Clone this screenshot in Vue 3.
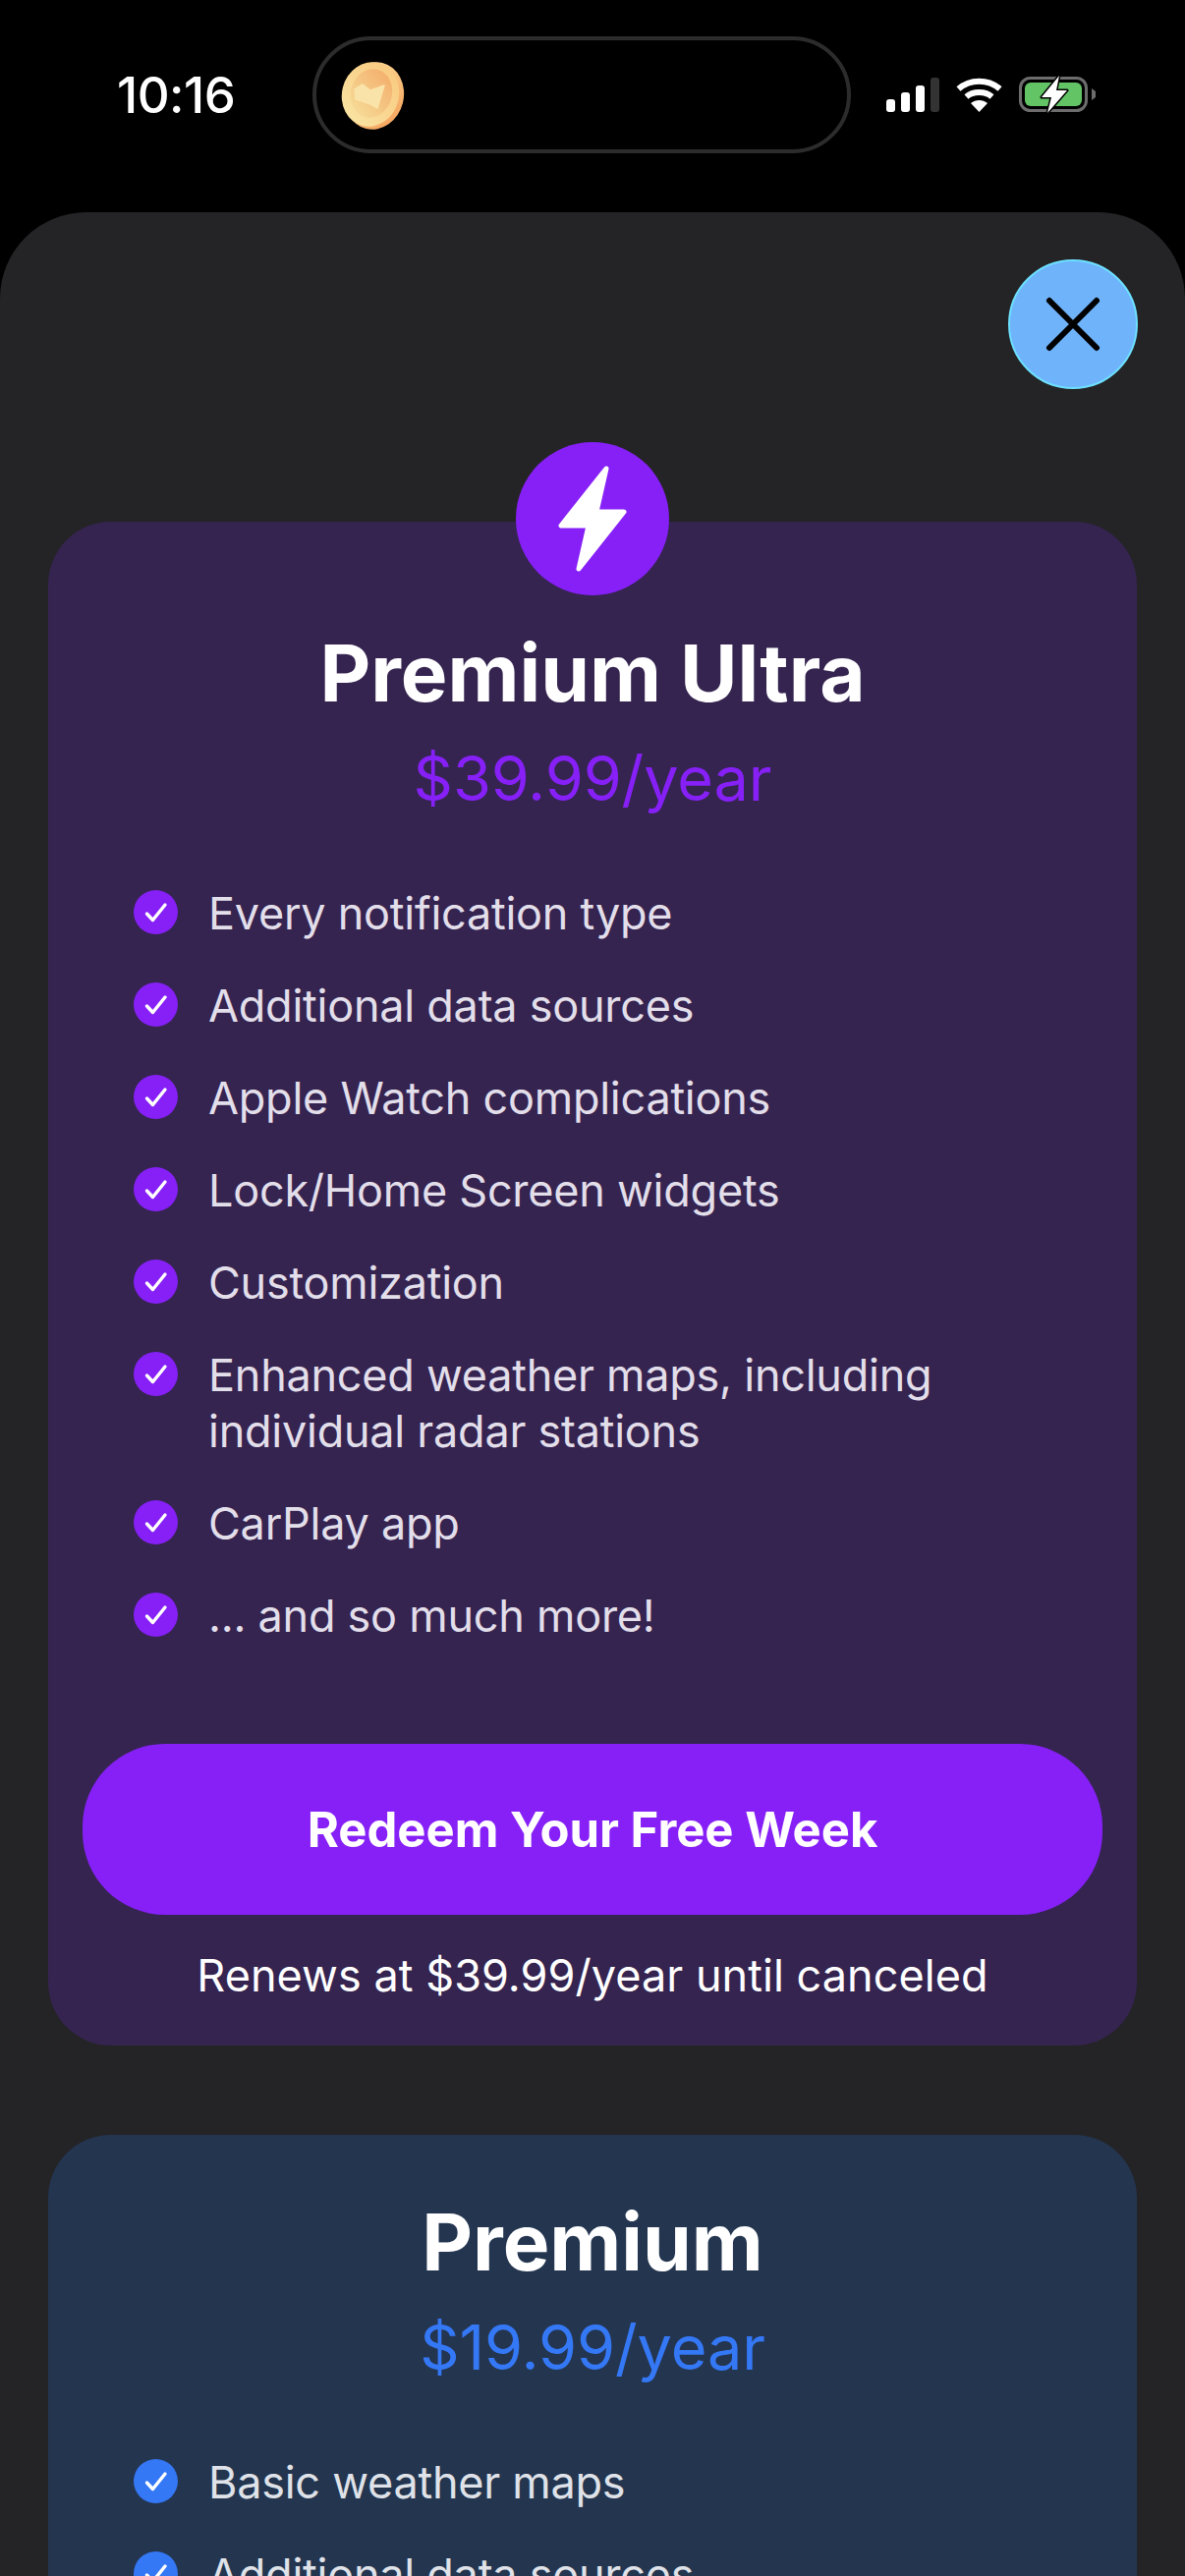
<script setup>
const ultra = ['Every notification type','Additional data sources','Apple Watch complications','Lock/Home Screen widgets','Customization','Enhanced weather maps, including individual radar stations','CarPlay app','... and so much more!']
const premium = ['Basic weather maps','Additional data sources']
</script>

<template>
  <div class="screen">
    <header class="status">
      <span class="time">10:16</span>
      <div class="island">
        <svg class="coin" width="66" height="70" viewBox="0 0 66 70">
          <defs>
            <linearGradient id="coinEdge" x1="0" y1="0" x2="1" y2="1"><stop offset="0" stop-color="#fbe3a0"/><stop offset="1" stop-color="#f59e58"/></linearGradient>
            <linearGradient id="coinFace" x1="0.2" y1="1" x2="0.8" y2="0"><stop offset="0" stop-color="#f9e4a4"/><stop offset="1" stop-color="#f9c97e"/></linearGradient>
            <linearGradient id="coinIn" x1="0.2" y1="1" x2="0.8" y2="0"><stop offset="0" stop-color="#f6dc98"/><stop offset="1" stop-color="#f4ae6c"/></linearGradient>
          </defs>
          <ellipse cx="35" cy="35.5" rx="30" ry="34.5" transform="rotate(14 35 35)" fill="url(#coinEdge)"/>
          <ellipse cx="31" cy="34" rx="29" ry="33" transform="rotate(14 31 34)" fill="url(#coinFace)"/>
          <ellipse cx="32" cy="33" rx="21" ry="25" transform="rotate(14 32 33)" fill="url(#coinIn)"/>
          <path d="M15 29 L23 24 L31 30 L45 25 L38 48 L31 44 L16 39 Z" fill="#fae3a8" stroke="#fae3a8" stroke-width="1.5" stroke-linejoin="round"/>
        </svg>
      </div>
      <div class="indicators">
        <div class="signal"><i class="b1"></i><i class="b2"></i><i class="b3"></i><i class="b4"></i></div>
        <svg class="wifi" width="47" height="35" viewBox="0 0 47 35" fill="none" stroke="#fff" stroke-width="6">
          <path d="M2.5 11.5 C14 1 33 1 44.5 11.5"/>
          <path d="M10.5 19.5 C17 13.5 30 13.5 36.5 19.5"/>
          <path d="M23.5 35 L15 26 C20 22 27 22 32 26 Z" fill="#fff" stroke="none"/>
        </svg>
        <svg class="battery" width="78" height="39" viewBox="0 0 78 39">
          <rect x="1.5" y="2.5" width="67" height="33" rx="10" fill="none" stroke="#6d6d6d" stroke-width="3"/>
          <rect x="6" y="7" width="58" height="24" rx="6" fill="#63c466"/>
          <path d="M74 13 L78 16 V22 L74 25 Z" fill="#6d6d6d"/>
          <path d="M41 0 L23 22 H33 L29 38 L49 15 H38 Z" fill="#fff" stroke="#000" stroke-width="3" stroke-linejoin="round" paint-order="stroke"/>
        </svg>
      </div>
    </header>

    <main class="sheet">
      <button class="close" aria-label="Close">
        <svg width="56" height="56" viewBox="0 0 56 56" fill="none" stroke="#000" stroke-width="6" stroke-linecap="round">
          <path d="M4 4 L52 52 M52 4 L4 52"/>
        </svg>
      </button>

      <section class="card card-ultra">
        <div class="badge">
          <svg width="70" height="110" viewBox="0 0 70 110">
            <path d="M49 4 L3 62 H31 L21 106 L67 48 H39 Z" fill="#fff" stroke="#fff" stroke-width="5" stroke-linejoin="round"/>
          </svg>
        </div>
        <h2 class="title">Premium Ultra</h2>
        <p class="price">$39.99/year</p>
        <ul class="list">
          <li v-for="item in ultra" :key="item" class="row">
            <span class="tick">
              <svg width="24" height="22" viewBox="0 0 24 22" fill="none" stroke="#fff" stroke-width="3.4" stroke-linecap="round" stroke-linejoin="round"><path d="M2.5 12 L8.5 18.5 L21 3"/></svg>
            </span>
            <span class="label">{{ item }}</span>
          </li>
        </ul>
        <button class="cta">Redeem Your Free Week</button>
        <p class="renew">Renews at $39.99/year until canceled</p>
      </section>

      <section class="card card-premium">
        <h2 class="title">Premium</h2>
        <p class="price">$19.99/year</p>
        <ul class="list">
          <li v-for="item in premium" :key="item" class="row">
            <span class="tick">
              <svg width="24" height="22" viewBox="0 0 24 22" fill="none" stroke="#fff" stroke-width="3.4" stroke-linecap="round" stroke-linejoin="round"><path d="M2.5 12 L8.5 18.5 L21 3"/></svg>
            </span>
            <span class="label">{{ item }}</span>
          </li>
        </ul>
      </section>
    </main>
  </div>
</template>

<style>
html, body { margin: 0; background: #000; }
</style>

<style scoped>
.screen {
  width: 1206px;
  height: 2622px;
  overflow: hidden;
  background: #000;
  font-family: Inter, "Liberation Sans", sans-serif;
  color: #fff;
}
.status {
  height: 216px;
  box-sizing: border-box;
  padding: 37px 0 0 119px;
  display: flex;
  align-items: flex-start;
}
.time {
  width: 199px;
  font-size: 51px;
  font-weight: 500;
  line-height: 119px;
  letter-spacing: -0.5px;
}
.island {
  width: 548px;
  height: 119px;
  box-sizing: border-box;
  border: 4px solid #2c2c2c;
  border-radius: 60px;
  background: #000;
  display: flex;
  align-items: center;
  padding-left: 24px;
}
.coin { display: block; }
.indicators {
  margin-left: 36px;
  padding-top: 42px;
  display: flex;
  align-items: flex-start;
  gap: 17px;
}
.signal { display: flex; align-items: flex-end; gap: 6px; height: 35px; }
.signal i { display: block; width: 9px; border-radius: 3px; background: #fff; }
.signal .b1 { height: 13px; }
.signal .b2 { height: 20px; }
.signal .b3 { height: 27px; }
.signal .b4 { height: 35px; background: #333; }
.wifi, .battery { display: block; }
.battery { margin-top: -2px; }

.sheet {
  position: relative;
  min-height: 2406px;
  box-sizing: border-box;
  padding: 315px 49px 0;
  background: #242426;
  border-radius: 88px 88px 0 0;
}
.close {
  position: absolute;
  top: 48px;
  right: 48px;
  width: 132px;
  height: 132px;
  box-sizing: border-box;
  padding: 0;
  border: 2px solid #6de0ff;
  border-radius: 50%;
  background: #6fb3fb;
  display: flex;
  align-items: center;
  justify-content: center;
}
.card {
  position: relative;
  box-sizing: border-box;
  border-radius: 64px;
  display: flex;
  flex-direction: column;
  align-items: center;
  padding: 0 35px;
}
.card-ultra { background: #352450; height: 1551px; padding-top: 104px; margin-bottom: 91px; --accent: #8620f7; }
.card-premium { background: #243550; padding-top: 59px; padding-bottom: 100px; --accent: #3478f6; }
.badge {
  position: absolute;
  top: -81px;
  left: 476px;
  width: 156px;
  height: 156px;
  border-radius: 50%;
  background: #8620f7;
  display: flex;
  align-items: center;
  justify-content: center;
}
.title {
  margin: 0;
  font-size: 80px;
  line-height: 100px;
  font-weight: 700;
  color: #fff;
}
.price {
  margin: 12px 0 0;
  font-size: 63px;
  line-height: 90px;
  font-weight: 400;
  letter-spacing: -0.1px;
  color: var(--accent);
}
.list {
  list-style: none;
  margin: 64px 0 0;
  padding: 0 0 0 52px;
  align-self: stretch;
  display: flex;
  flex-direction: column;
  gap: 37px;
}
.row { display: flex; align-items: flex-start; gap: 31px; }
.tick {
  flex: none;
  width: 45px;
  height: 45px;
  margin-top: 5px;
  border-radius: 50%;
  background: var(--accent);
  display: flex;
  align-items: center;
  justify-content: center;
}
.label {
  font-size: 45px;
  line-height: 57px;
  letter-spacing: -0.25px;
  color: #e2deea;
  width: 800px;
}
.card-premium .label { color: #dfe2e8; }
.cta {
  margin-top: 102px;
  flex: none;
  width: 1038px;
  height: 174px;
  border: 0;
  border-radius: 84px;
  background: #8620f7;
  color: #fff;
  font-family: inherit;
  font-size: 49px;
  font-weight: 700;
}
.renew {
  margin: 33px 0 0;
  font-size: 45px;
  line-height: 57px;
  letter-spacing: 0.05px;
  color: #fff;
}
</style>
